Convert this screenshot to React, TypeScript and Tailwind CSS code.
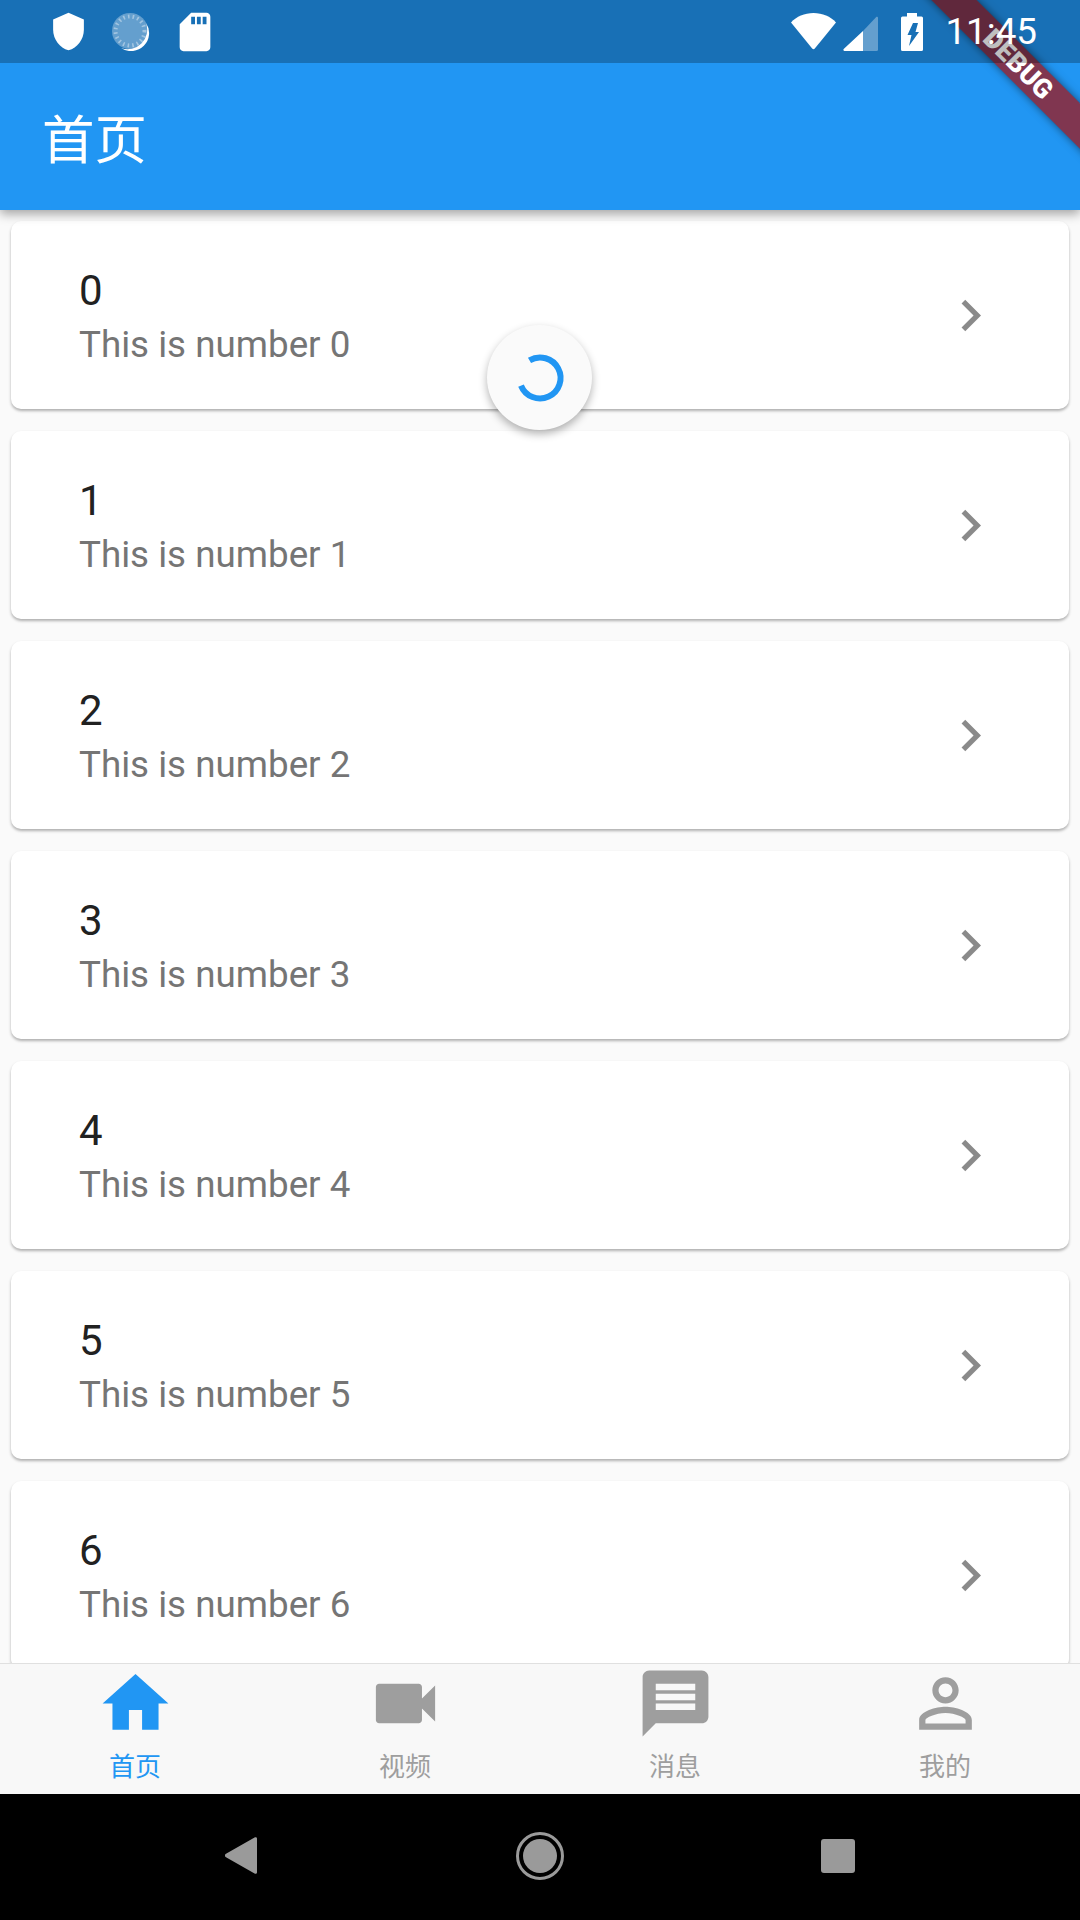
import React from 'react'

const CJK = "font-['Roboto','Noto_Sans_CJK_SC',sans-serif]"

const items = [0, 1, 2, 3, 4, 5, 6]

const tabs = [
    {
        label: '首页',
        active: true,
        d: 'M10 20v-6h4v6h5v-8h3L12 3 2 12h3v8z',
    },
    {
        label: '视频',
        active: false,
        d: 'M17 10.5V7c0-.55-.45-1-1-1H4c-.55 0-1 .45-1 1v10c0 .55.45 1 1 1h12c.55 0 1-.45 1-1v-3.5l4 4v-11l-4 4z',
    },
    {
        label: '消息',
        active: false,
        d: 'M20 2H4c-1.1 0-1.99.9-1.99 2L2 22l4-4h14c1.1 0 2-.9 2-2V4c0-1.1-.9-2-2-2zm-2 12H6v-2h12v2zm0-3H6V9h12v2zm0-3H6V6h12v2z',
    },
    {
        label: '我的',
        active: false,
        d: 'M12 5.9c1.16 0 2.1.94 2.1 2.1s-.94 2.1-2.1 2.1S9.9 9.16 9.9 8s.94-2.1 2.1-2.1m0 9c2.97 0 6.1 1.46 6.1 2.1v1.1H5.9V17c0-.64 3.13-2.1 6.1-2.1M12 4C9.79 4 8 5.79 8 8s1.79 4 4 4 4-1.79 4-4-1.79-4-4-4zm0 9c-2.67 0-8 1.34-8 4v3h16v-3c0-2.66-5.33-4-8-4z',
    },
]

// El scrim de la barra de estado va encima del banner de debug
const StatusBar = () => (
    <div className="relative z-20 flex h-[63px] items-center bg-black/25 pl-[48px] pr-[43px]">
        {/* Iconos de la izquierda */}
        <svg viewBox="0 0 24 24" fill="white" className="h-[41px] w-[41px]">
            <path d="M12 1L3 5v6c0 5.55 3.84 10.74 9 12 5.16-1.26 9-6.45 9-12V5l-9-4z" />
        </svg>
        <svg viewBox="0 0 38 38" className="ml-[23px] h-[38px] w-[38px]">
            <circle cx="18" cy="18" r="18" fill="white" fillOpacity="0.33" />
            <circle cx="18" cy="18" r="14.5" fill="none" stroke="white" strokeOpacity="0.4" strokeWidth="4" strokeDasharray="1.6 3.1" />
            <path d="M34 10A18 18 0 0 1 9 35A19.500 19.500 0 0 0 34 10z" fill="white" />
        </svg>
        <svg viewBox="0 0 24 24" fill="white" className="ml-[22px] h-[46px] w-[46px]">
            <path d="M18 2h-8L4.02 8 4 20c0 1.1.9 2 2 2h12c1.1 0 2-.9 2-2V4c0-1.1-.9-2-2-2zm-6 6h-2V4h2v4zm3 0h-2V4h2v4zm3 0h-2V4h2v4z" />
        </svg>

        {/* Iconos de la derecha */}
        <svg viewBox="0 0 45 37" fill="white" className="ml-auto h-[37px] w-[45px]">
            <path d="M0 9.5C5.5 3.5 13.5 0 22.5 0S39.500 3.500 45 9.500L23.800 35.600a1.700 1.700 0 0 1-2.600 0z" />
        </svg>
        <svg viewBox="0 0 35 35" className="ml-[7px] mt-[3px] h-[35px] w-[35px]">
            <path d="M20 15V35H1.500a1.200 1.200 0 0 1-.8-2z" fill="white" />
            <path d="M20 15L33 1.200c.8-.8 2-.3 2 .8V33.500a1.500 1.500 0 0 1-1.500 1.500H20z" fill="white" fillOpacity="0.33" />
        </svg>
        <svg viewBox="0 0 22 38" className="ml-[23px] h-[38px] w-[22px]">
            <path
                fillRule="evenodd"
                fill="white"
                d="M6 0h10v3.500h4.500A1.500 1.500 0 0 1 22 5v31.500a1.500 1.500 0 0 1-1.500 1.500H1.500A1.500 1.500 0 0 1 0 36.500V5a1.500 1.500 0 0 1 1.500-1.500H6zM12 10H17L14.500 19H18L8 33L10.500 22H6.500z"
            />
        </svg>
        <span className="ml-[22px] font-['Roboto',sans-serif] text-[36.750px] leading-[63px] text-white">
            11:45
        </span>
    </div>
)

const ListCard = ({ n }: { n: number }) => (
    <div className="mx-[11px] mb-[22px] flex h-[188px] shrink-0 items-center justify-between rounded-[10px] bg-white pl-[68px] pr-[67px] shadow-[0_2px_3px_rgba(0,0,0,0.3)]">
        <div className="pt-[7px] font-['Roboto',sans-serif]">
            <p className="text-[42px] leading-[53px] text-[#212121]">{n}</p>
            <p className="text-[36.750px] leading-[56px] text-[#757575]">
                This is number {n}
            </p>
        </div>
        <svg viewBox="0 0 24 24" fill="#8a8a8a" className="h-[63px] w-[63px]">
            <path d="M10 6L8.59 7.41 13.17 12l-4.58 4.59L10 18l6-6z" />
        </svg>
    </div>
)

const BottomTabs = () => (
    <div className="z-10 grid h-[131px] shrink-0 grid-cols-4 border-t border-[#e0e0e0] bg-[#f8f8f8]">
        {tabs.map((tab) => (
            <div key={tab.label} className="flex flex-col items-center">
                <svg
                    viewBox="0 0 24 24"
                    fill={tab.active ? '#2196f3' : '#9e9e9e'}
                    className="h-[79px] w-[79px]"
                >
                    <path d={tab.d} />
                </svg>
                <span
                    className={`${CJK} mt-[6px] text-[26px] leading-[36px] ${tab.active ? 'text-[#2196f3]' : 'text-[#9e9e9e]'}`}
                >
                    {tab.label}
                </span>
            </div>
        ))}
    </div>
)

const NavBar = () => (
    <div className="flex h-[126px] shrink-0 items-center bg-black pb-[3px]">
        <svg viewBox="0 0 32 37" fill="#9a9a9a" className="ml-[225px] h-[37px] w-[32px]">
            <path d="M30 .300a1.500 1.500 0 0 1 2 1.300v33.800a1.500 1.500 0 0 1-2 1.300L1 20.300a2 2 0 0 1 0-3.600z" />
        </svg>
        <svg viewBox="0 0 48 48" className="ml-[259px] h-[48px] w-[48px]">
            <circle cx="24" cy="24" r="22.500" fill="none" stroke="#9a9a9a" strokeWidth="3" />
            <circle cx="24" cy="24" r="17" fill="#9a9a9a" />
        </svg>
        <div className="ml-[257px] h-[34px] w-[34px] rounded-[3px] bg-[#9a9a9a]" />
    </div>
)

export default function App() {
    return (
        <div className="relative flex h-[1920px] w-[1080px] flex-col overflow-hidden bg-[#fafafa]">
            {/* AppBar con la barra de estado */}
            <div className="relative z-10 h-[210px] shrink-0 bg-[#2196f3] shadow-[0_4px_10px_rgba(0,0,0,0.35)]">
                <StatusBar />
                <div className="flex h-[147px] items-center pl-[42px] pt-[9px]">
                    <span className={`${CJK} text-[52.500px] text-white`}>首页</span>
                </div>

                {/* Banner de debug */}
                <div className="absolute left-[870px] top-[50px] z-10 flex h-[32px] w-[300px] rotate-45 items-center justify-center bg-[#a01619]/75 pr-[5px] shadow-[0_0_8px_rgba(0,0,0,0.5)]">
                    <span className="font-['Roboto',sans-serif] text-[26.800px] font-black leading-[32px] text-white">
                        DEBUG
                    </span>
                </div>
            </div>

            {/* Lista */}
            <div className="flex min-h-0 flex-1 flex-col overflow-hidden pt-[11px]">
                {items.map((n) => (
                    <ListCard key={n} n={n} />
                ))}
            </div>

            <BottomTabs />
            <NavBar />

            {/* Indicador de recarga */}
            <div className="absolute left-[487px] top-[325px] z-20 flex h-[105px] w-[105px] items-center justify-center rounded-full bg-[#fafafa] shadow-[0_4px_8px_rgba(0,0,0,0.3)]">
                <svg viewBox="0 0 60 60" fill="none" className="h-[60px] w-[60px]">
                    <path
                        d="M19.500 12.400A20.500 20.500 0 1 1 11 37.600"
                        stroke="#2196f3"
                        strokeWidth="6"
                    />
                </svg>
            </div>
        </div>
    )
}
